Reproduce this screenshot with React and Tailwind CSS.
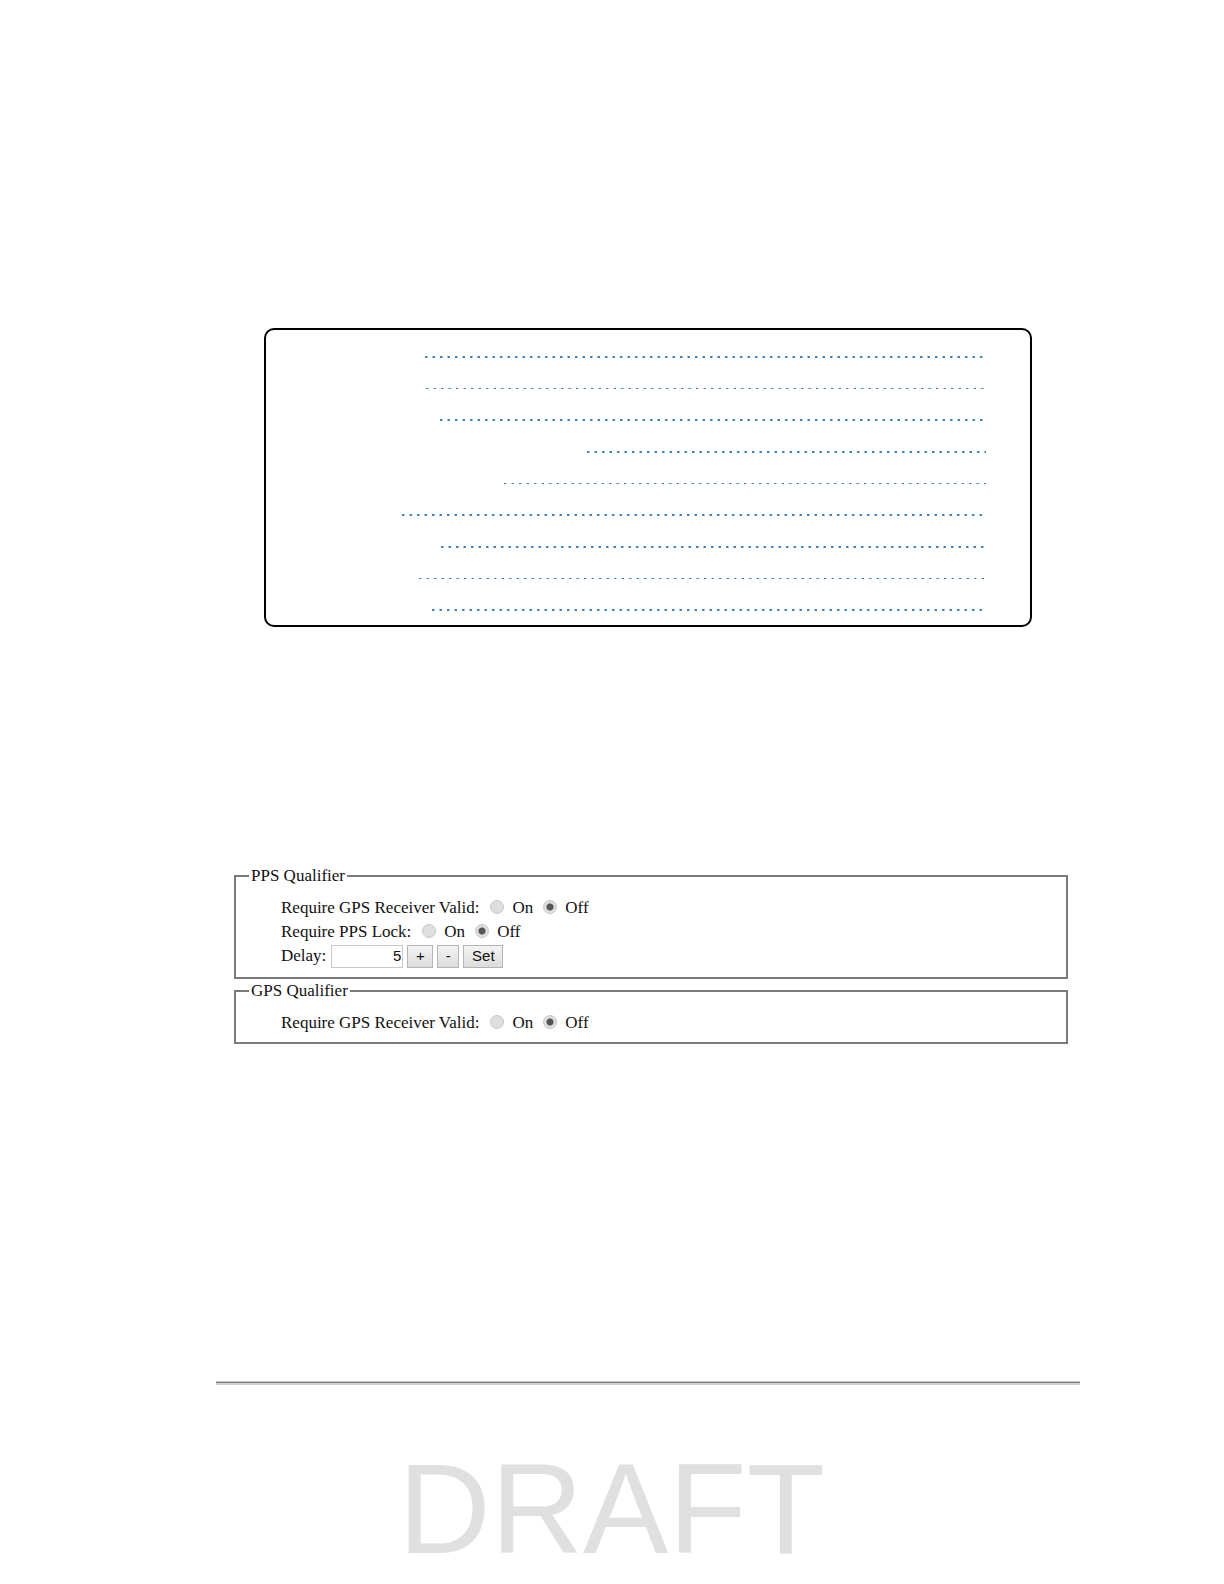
import { useState } from "react";

const leaders = [
  { indent: 159, thin: false },
  { indent: 160, thin: true },
  { indent: 174, thin: false },
  { indent: 321, thin: false },
  { indent: 238, thin: true },
  { indent: 136, thin: false },
  { indent: 175, thin: false },
  { indent: 153, thin: true },
  { indent: 166, thin: false },
];

const buttonClass =
  "h-[23px] border border-[#b4b4b4] bg-linear-to-b from-[#f4f4f4] to-[#dcdcdc] text-center font-['Liberation_Sans',sans-serif] text-[15px] leading-[20px]";

function Leader({ indent, thin }) {
  return (
    <svg
      className={thin ? "block h-px" : "block h-[2px]"}
      style={{ marginLeft: indent, width: `calc(100% - ${indent}px)` }}
      aria-hidden="true"
    >
      <line x1="0" y1="50%" x2="100%" y2="50%" stroke="#3f86bb" strokeWidth={thin ? 1 : 2} strokeDasharray="2.5 5" />
    </svg>
  );
}

function OnOff({ label, name }) {
  const [value, setValue] = useState("off");
  const radioClass =
    "mb-[2px] size-[14px] shrink-0 appearance-none rounded-full border border-[#c8c8c8] bg-[#dedede] checked:bg-[radial-gradient(circle,#555_0_3px,#dedede_4px)]";

  return (
    <div role="radiogroup" aria-label={label} className="flex h-6 items-center">
      <span>{label}</span>
      <label className="ml-[11px] flex items-center gap-2">
        <input type="radio" name={name} checked={value === "on"} onChange={() => setValue("on")} className={radioClass} />
        On
      </label>
      <label className="ml-[10px] flex items-center gap-2">
        <input type="radio" name={name} checked={value === "off"} onChange={() => setValue("off")} className={radioClass} />
        Off
      </label>
    </div>
  );
}

function Delay() {
  const [delay, setDelay] = useState(5);

  return (
    <div className="flex h-6 items-center">
      <label htmlFor="delay">Delay:</label>
      <input
        id="delay"
        type="text"
        value={delay}
        onChange={(e) => setDelay(Number(e.target.value) || 0)}
        className="ml-[5px] h-[23px] w-[72px] border border-[#c8c8c8] bg-white px-px pb-[2px] text-right font-['Liberation_Sans',sans-serif] text-[15px]"
      />
      <button type="button" onClick={() => setDelay(delay + 1)} className={`${buttonClass} ml-1 w-[26px]`}>+</button>
      <button type="button" onClick={() => setDelay(delay - 1)} className={`${buttonClass} ml-1 w-[22px]`}>-</button>
      <button type="button" className={`${buttonClass} ml-1 w-10`}>Set</button>
    </div>
  );
}

export default function App() {
  return (
    <div className="min-h-screen bg-white pt-[328px] text-[#111]">
      <main className="ml-[216px] mr-36">
        <nav className="mx-12 flex flex-col gap-[30px] rounded-[10px] border-2 border-black pt-[26px] pr-11 pb-[14px]">
          {leaders.map((leader, i) => (
            <Leader key={i} {...leader} />
          ))}
        </nav>

        <form
          onSubmit={(e) => e.preventDefault()}
          className="mt-[239px] ml-[18px] mr-3 font-['Liberation_Serif',serif] text-[17px] leading-[20px]"
        >
          <fieldset className="border-2 border-[#7a7a7a] pt-[10px] pb-[9px] pl-[45px]">
            <legend className="-ml-8 px-[2px]">PPS Qualifier</legend>
            <OnOff label="Require GPS Receiver Valid:" name="pps-receiver" />
            <OnOff label="Require PPS Lock:" name="pps-lock" />
            <Delay />
          </fieldset>
          <fieldset className="mt-[2px] border-2 border-[#7a7a7a] pt-[10px] pb-[7px] pl-[45px]">
            <legend className="-ml-8 px-[2px]">GPS Qualifier</legend>
            <OnOff label="Require GPS Receiver Valid:" name="gps-receiver" />
          </fieldset>
        </form>

        <hr className="mt-[337px] h-1 border-t border-b-2 border-t-[#c8c8c8] border-b-[#d2d2d2] bg-[#777]" />
      </main>

      <p className="mt-[60px] mr-[1px] text-center font-['Liberation_Sans',sans-serif] text-[128px] leading-[128px] text-[#e0e0e0]">
        DRAFT
      </p>
    </div>
  );
}
